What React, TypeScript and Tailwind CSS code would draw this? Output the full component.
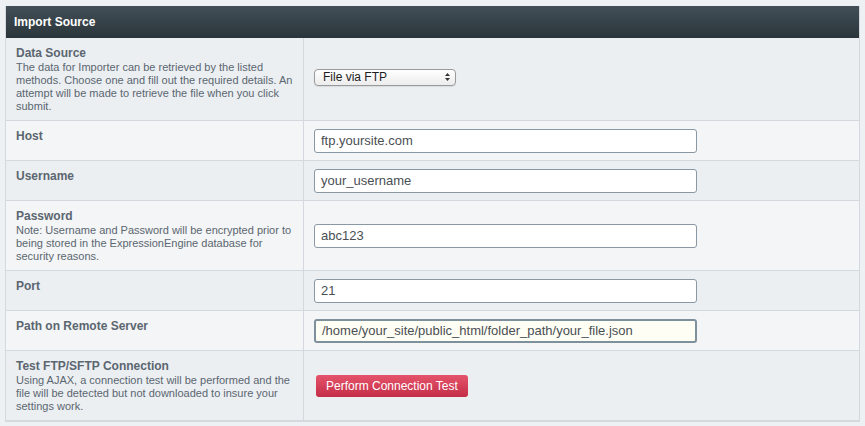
import React from "react";

const font = { fontFamily: '"Liberation Sans", Arial, Helvetica, sans-serif' };

function Row({
  dark,
  label,
  desc,
  children,
  h,
}: {
  dark: boolean;
  label: string;
  desc?: React.ReactNode;
  children: React.ReactNode;
  h: string;
}) {
  return (
    <div className={`flex border-b border-[#d3d9df] ${dark ? "bg-[#ebeff2]" : "bg-[#f3f5f6]"} ${h}`}>
      <div className="w-[298px] shrink-0 border-r border-[#d3d9df] pl-[10px] pr-[8px] pt-[8px]">
        <div className="text-[12px] leading-[15px] font-bold text-[#5b6670]">{label}</div>
        {desc && <div className="text-[11px] leading-[13px] text-[#5b6670]">{desc}</div>}
      </div>
      <div className="flex flex-1 items-center pl-[10px]">{children}</div>
    </div>
  );
}

function Input({ value, focused }: { value: string; focused?: boolean }) {
  return (
    <div
      className={`flex h-[24px] w-[383px] items-center rounded-[3px] pl-[6px] text-[13px] text-[#4a4f54] ${
        focused ? "border-2 border-[#7f909d] bg-[#fffef5] pl-[5px]" : "border border-[#8a98a4] bg-white"
      }`}
    >
      {value}
    </div>
  );
}

export default function App() {
  return (
    <div className="min-h-[426px] w-[865px] bg-[#eef1f4] pl-[5px] pt-[6px]" style={font}>
      <div className="w-[855px] border-x border-b border-[#d3d9df]">
        <div className="flex h-[32px] items-center bg-gradient-to-b from-[#434f57] to-[#2a353b] pl-[8px] text-[12px] font-bold text-white">
          Import Source
        </div>
        <Row
          dark
          h="h-[83px]"
          label="Data Source"
          desc={
            <>
              The data for Importer can be retrieved by the listed methods. Choose one and fill out the required
              details. An attempt will be made to retrieve the file when you click submit.
            </>
          }
        >
          <div className="mt-[-4px] flex h-[17px] w-[142px] items-center justify-between rounded-[4px] border border-[#9a9a9a] bg-gradient-to-b from-white to-[#ececec] pl-[8px] pr-[4px] text-[12px] text-[#1e1e1e] shadow-[0_1px_1px_rgba(0,0,0,0.08)]">
            <span>File via FTP</span>
            <svg width="7" height="10" viewBox="0 0 7 10">
              <path d="M3.5 1 L6 4 L1 4 Z" fill="#333" />
              <path d="M3.5 9 L6 6 L1 6 Z" fill="#333" />
            </svg>
          </div>
        </Row>
        <Row dark={false} h="h-[40px]" label="Host">
          <Input value="ftp.yoursite.com" />
        </Row>
        <Row dark h="h-[40px]" label="Username">
          <Input value="your_username" />
        </Row>
        <Row
          dark={false}
          h="h-[70px]"
          label="Password"
          desc="Note: Username and Password will be encrypted prior to being stored in the ExpressionEngine database for security reasons."
        >
          <Input value="abc123" />
        </Row>
        <Row dark h="h-[40px]" label="Port">
          <Input value="21" />
        </Row>
        <Row dark={false} h="h-[40px]" label="Path on Remote Server">
          <Input value="/home/your_site/public_html/folder_path/your_file.json" focused />
        </Row>
        <Row
          dark
          h="h-[70px]"
          label="Test FTP/SFTP Connection"
          desc="Using AJAX, a connection test will be performed and the file will be detected but not downloaded to insure your settings work."
        >
          <div className="ml-[2px] flex h-[22px] items-center rounded-[3px] bg-gradient-to-b from-[#e5536a] to-[#c42c48] px-[10px] text-[12px] text-white">
            Perform Connection Test
          </div>
        </Row>
      </div>
    </div>
  );
}
